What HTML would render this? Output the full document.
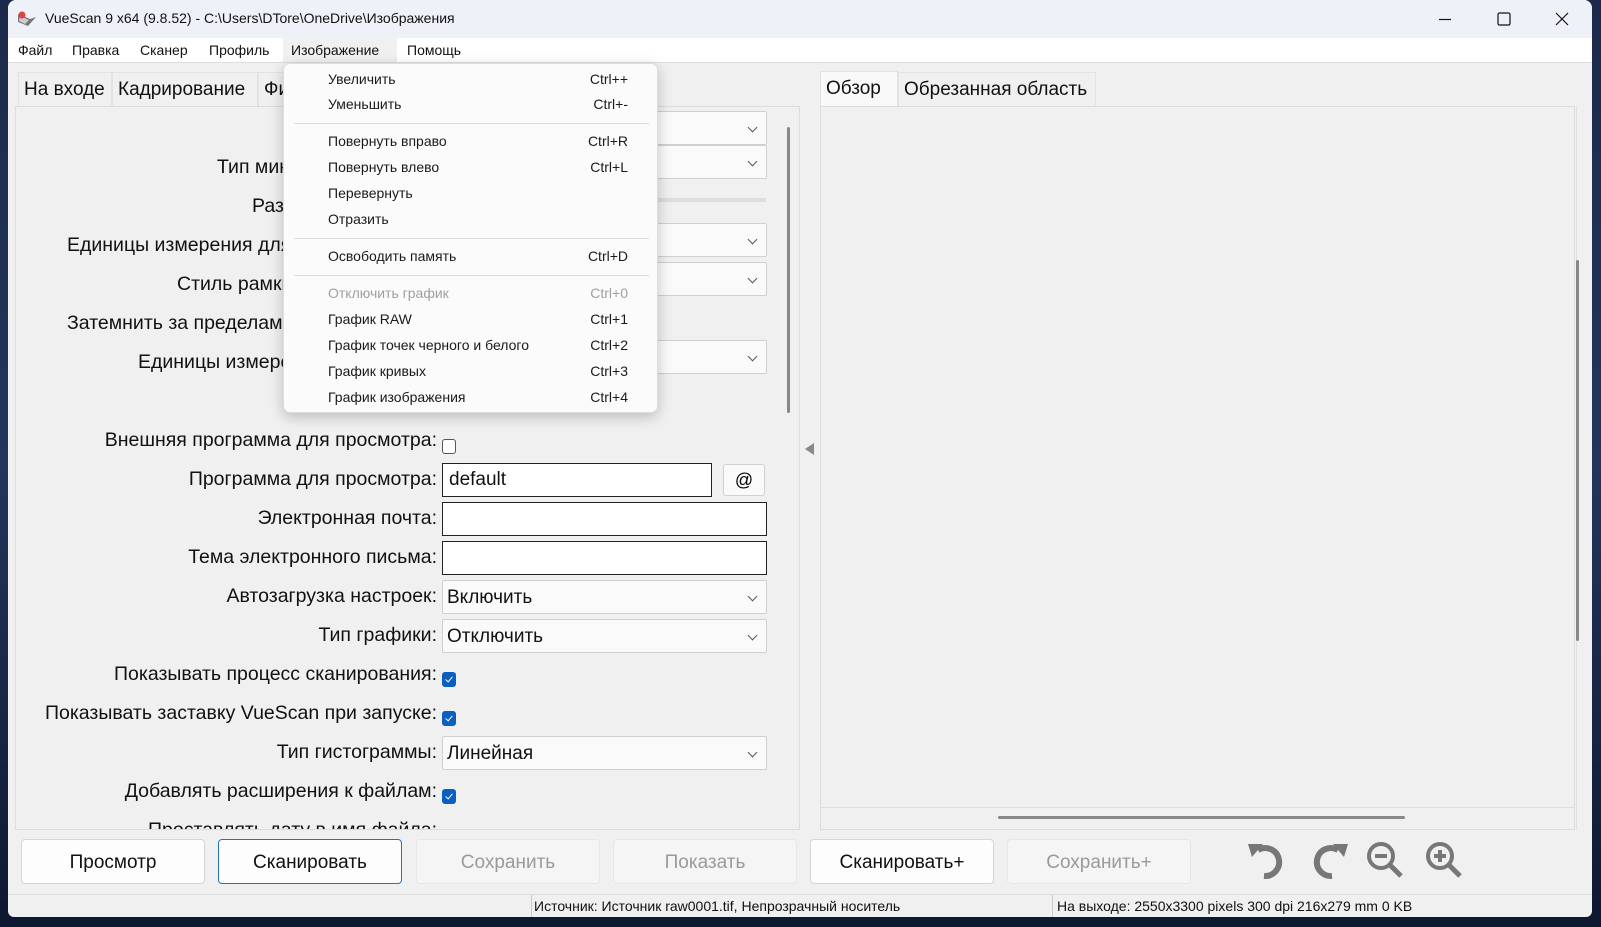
<!DOCTYPE html>
<html><head><meta charset="utf-8">
<style>
*{box-sizing:border-box;margin:0;padding:0}
body{width:1601px;height:927px;overflow:hidden;position:relative;font-family:"Liberation Sans","DejaVu Sans",sans-serif;background:linear-gradient(180deg,#1b2a4a 0%,#22355c 50%,#0e1830 100%);}
.abs{position:absolute}
#win{left:8px;top:0;width:1584px;height:917px;background:#f0f0f0;border-radius:8px 8px 6px 6px;overflow:hidden}
#title{left:0;top:0;width:100%;height:38px;background:#eef2f8}
#title .t{left:37px;top:10px;font-size:14px;color:#111}
#menubar{left:0;top:38px;width:100%;height:25px;background:#fff;border-bottom:1px solid #ddd}
#menubar span{position:absolute;top:4px;font-size:14px;color:#111}
.tab{position:absolute;height:36px;font-size:19px;color:#111;padding:6px 5px;border:1px solid #e2e2e2;border-bottom:none;background:#f0f0f0}
.panel{position:absolute;background:#f0f0f0;border:1px solid #dcdcdc}
.lbl{position:absolute;right:371px;font-size:19.5px;color:#111;white-space:nowrap;text-align:right}
.lbll{position:absolute;font-size:19.5px;color:#111;white-space:nowrap}
.sel{position:absolute;left:434px;width:325px;height:34px;background:#fafafa;border:1px solid #d0d0d0;border-radius:2px;font-size:19px;padding:6px 4px;color:#111}
.sel:after{content:"";position:absolute;right:10px;top:12px;width:6px;height:6px;border-right:1px solid #555;border-bottom:1px solid #555;transform:rotate(45deg)}
.inp{position:absolute;left:434px;width:325px;height:34px;background:#fff;border:1.5px solid #222;font-size:19px;padding:5px 6px;color:#111}
.cb{position:absolute;left:434px;width:14px;height:15px;border:1px solid #555;border-radius:3px;background:#fff}
.cb.on{background:#0a5fbf;border-color:#0a5fbf}
.cb.on:after{content:"";position:absolute;left:4px;top:2px;width:3px;height:6px;border-right:1px solid #fff;border-bottom:1px solid #fff;transform:rotate(40deg)}
.btn{position:absolute;top:839px;width:184px;height:45px;background:#fdfdfd;border:1px solid #d5d5d5;border-radius:4px;font-size:19px;text-align:center;line-height:45px;color:#111}
.btn.dis{background:#f5f5f5;color:#9a9a9a;border-color:#e6e6e6}
#menu{left:283px;top:63px;width:375px;height:350px;background:#fbfbfb;border:1px solid #ddd;border-radius:7px;box-shadow:0 4px 14px rgba(0,0,0,.22);z-index:10}
#menu .it{position:absolute;left:44px;width:300px;font-size:14px;color:#1a1a1a}
#menu .it b{position:absolute;right:0;font-weight:normal}
#menu .it.g{color:#a0a0a0}
#menu .sep{position:absolute;left:10px;width:355px;height:1px;background:#ddd}
</style></head><body>
<div id="win" class="abs">
 <div id="title" class="abs">
  <svg class="abs" style="left:8px;top:10px" width="22" height="20" viewBox="0 0 22 20"><path d="M2 4 L14 9 L20 7 L12 16 L2 12 Z" fill="#777"/><path d="M4 6 L13 10 L9 14 L3 11Z" fill="#ccc"/><circle cx="6" cy="5" r="3.5" fill="#d44"/></svg>
  <span class="abs t">VueScan 9 x64 (9.8.52) - C:\Users\DTore\OneDrive\Изображения</span>
  <svg class="abs" style="left:1430px;top:12px" width="14" height="14"><path d="M1 7.5H13" stroke="#111" stroke-width="1.2"/></svg>
  <svg class="abs" style="left:1489px;top:12px" width="14" height="14"><rect x="1" y="1" width="12" height="12" rx="1.5" fill="none" stroke="#111" stroke-width="1.2"/></svg>
  <svg class="abs" style="left:1547px;top:12px" width="14" height="14"><path d="M1 1L13 13M13 1L1 13" stroke="#111" stroke-width="1.2"/></svg>
 </div>
 <div id="menubar" class="abs">
  <span style="left:10px">Файл</span><span style="left:64px">Правка</span><span style="left:132px">Сканер</span><span style="left:201px">Профиль</span>
  <span style="left:275px;top:0;width:114px;height:24px;background:#f0f0f0"></span>
  <span style="left:283px">Изображение</span><span style="left:399px">Помощь</span>
 </div>
 <div class="tab" style="left:10px;top:72px;width:94px">На входе</div>
 <div class="tab" style="left:104px;top:72px;width:146px">Кадрирование</div>
 <div class="tab" style="left:250px;top:72px;width:60px">Фильтр</div>
 <div class="panel" style="left:7px;top:106px;width:785px;height:724px;overflow:hidden">
  <div class="abs" style="left:771px;top:20px;width:3px;height:286px;background:#888;border-radius:2px"></div>
 </div>
 <div class="abs" style="left:0;top:106px;width:800px;height:723px;overflow:hidden">
  <div class="sel" style="top:5px"></div>
  <div class="lbll" style="left:209px;top:50px">Тип миниатюр:</div><div class="sel" style="top:39px"></div>
  <div class="lbll" style="left:244px;top:89px">Размер миниатюр:</div><div class="abs" style="left:640px;top:92px;width:118px;height:4px;background:#ddd"></div>
  <div class="lbll" style="left:59px;top:128px">Единицы измерения для линейки:</div><div class="sel" style="top:117px"></div>
  <div class="lbll" style="left:169px;top:167px">Стиль рамки обрезки:</div><div class="sel" style="top:156px"></div>
  <div class="lbll" style="left:59px;top:206px">Затемнить за пределами рамки:</div>
  <div class="lbll" style="left:130px;top:245px">Единицы измерения:</div><div class="sel" style="top:234px"></div>
  <div class="cb" style="top:288px"></div>
  <div class="lbl" style="top:323px">Внешняя программа для просмотра:</div><div class="cb" style="top:333px"></div>
  <div class="lbl" style="top:362px">Программа для просмотра:</div><div class="inp" style="top:357px;width:270px">default</div>
  <div class="abs" style="left:715px;top:358px;width:42px;height:32px;border:1px solid #d0d0d0;background:#fafafa;border-radius:3px;font-size:18px;text-align:center;line-height:30px">@</div>
  <div class="lbl" style="top:401px">Электронная почта:</div><div class="inp" style="top:396px"></div>
  <div class="lbl" style="top:440px">Тема электронного письма:</div><div class="inp" style="top:435px"></div>
  <div class="lbl" style="top:479px">Автозагрузка настроек:</div><div class="sel" style="top:474px">Включить</div>
  <div class="lbl" style="top:518px">Тип графики:</div><div class="sel" style="top:513px">Отключить</div>
  <div class="lbl" style="top:557px">Показывать процесс сканирования:</div><div class="cb on" style="top:566px"></div>
  <div class="lbl" style="top:596px">Показывать заставку VueScan при запуске:</div><div class="cb on" style="top:605px"></div>
  <div class="lbl" style="top:635px">Тип гистограммы:</div><div class="sel" style="top:630px">Линейная</div>
  <div class="lbl" style="top:674px">Добавлять расширения к файлам:</div><div class="cb on" style="top:683px"></div>
  <div class="lbl" style="top:713px">Проставлять дату в имя файла:</div>
 </div>
 <svg class="abs" style="left:797px;top:443px" width="10" height="12"><path d="M9 0V12L0 6Z" fill="#888"/></svg>
 <div class="tab" style="left:812px;top:71px;width:78px;background:#f9f9f9;height:36px">Обзор</div>
 <div class="tab" style="left:890px;top:72px;width:198px">Обрезанная область</div>
 <div class="panel" style="left:812px;top:106px;width:755px;height:702px"></div>
 <div class="abs" style="left:812px;top:808px;width:755px;height:22px;border:1px solid #dcdcdc;border-top:none"></div>
 <div class="abs" style="left:990px;top:816px;width:407px;height:3px;background:#888;border-radius:2px"></div>
 <div class="abs" style="left:1568px;top:106px;width:16px;height:724px;border-left:1px solid #e0e0e0"></div>
 <div class="abs" style="left:1568px;top:260px;width:3px;height:381px;background:#888;border-radius:2px"></div>
 <div class="btn" style="left:13px">Просмотр</div>
 <div class="btn" style="left:210px;border-color:#2a6fb8">Сканировать</div>
 <div class="btn dis" style="left:408px">Сохранить</div>
 <div class="btn dis" style="left:605px">Показать</div>
 <div class="btn" style="left:802px">Сканировать+</div>
 <div class="btn dis" style="left:999px">Сохранить+</div>
 <svg class="abs" style="left:1238px;top:840px" width="42" height="42" viewBox="0 0 42 42"><path d="M12 10 A14 14 0 1 1 18 36" fill="none" stroke="#777" stroke-width="6"/><path d="M2 4 L17 4 L6 17Z" fill="#777"/></svg>
 <svg class="abs" style="left:1300px;top:840px" width="42" height="42" viewBox="0 0 42 42"><path d="M30 10 A14 14 0 1 0 24 36" fill="none" stroke="#777" stroke-width="6"/><path d="M40 4 L25 4 L36 17Z" fill="#777"/></svg>
 <svg class="abs" style="left:1357px;top:840px" width="42" height="42" viewBox="0 0 42 42"><circle cx="16" cy="16" r="12" fill="none" stroke="#777" stroke-width="4"/><path d="M10 16H22" stroke="#777" stroke-width="4"/><path d="M25 25L36 36" stroke="#777" stroke-width="5"/></svg>
 <svg class="abs" style="left:1416px;top:840px" width="42" height="42" viewBox="0 0 42 42"><circle cx="16" cy="16" r="12" fill="none" stroke="#777" stroke-width="4"/><path d="M10 16H22M16 10V22" stroke="#777" stroke-width="4"/><path d="M25 25L36 36" stroke="#777" stroke-width="5"/></svg>
 <div class="abs" style="left:0;top:894px;width:100%;height:1px;background:#ddd"></div>
 <div class="abs" style="left:523px;top:895px;width:1px;height:22px;background:#ccc"></div>
 <div class="abs" style="left:1044px;top:895px;width:1px;height:22px;background:#ccc"></div>
 <div class="abs" style="left:526px;top:898px;font-size:14px;color:#111">Источник: Источник raw0001.tif, Непрозрачный носитель</div>
 <div class="abs" style="left:1049px;top:898px;font-size:14px;color:#111">На выходе: 2550x3300 pixels 300 dpi 216x279 mm 0 KB</div>
</div>
<div id="menu" class="abs">
 <div class="it" style="top:7px">Увеличить<b>Ctrl++</b></div>
 <div class="it" style="top:32px">Уменьшить<b>Ctrl+-</b></div>
 <div class="sep" style="top:59px"></div>
 <div class="it" style="top:69px">Повернуть вправо<b>Ctrl+R</b></div>
 <div class="it" style="top:95px">Повернуть влево<b>Ctrl+L</b></div>
 <div class="it" style="top:121px">Перевернуть</div>
 <div class="it" style="top:147px">Отразить</div>
 <div class="sep" style="top:174px"></div>
 <div class="it" style="top:184px">Освободить память<b>Ctrl+D</b></div>
 <div class="sep" style="top:211px"></div>
 <div class="it g" style="top:221px">Отключить график<b>Ctrl+0</b></div>
 <div class="it" style="top:247px">График RAW<b>Ctrl+1</b></div>
 <div class="it" style="top:273px">График точек черного и белого<b>Ctrl+2</b></div>
 <div class="it" style="top:299px">График кривых<b>Ctrl+3</b></div>
 <div class="it" style="top:325px">График изображения<b>Ctrl+4</b></div>
</div>
</body></html>
